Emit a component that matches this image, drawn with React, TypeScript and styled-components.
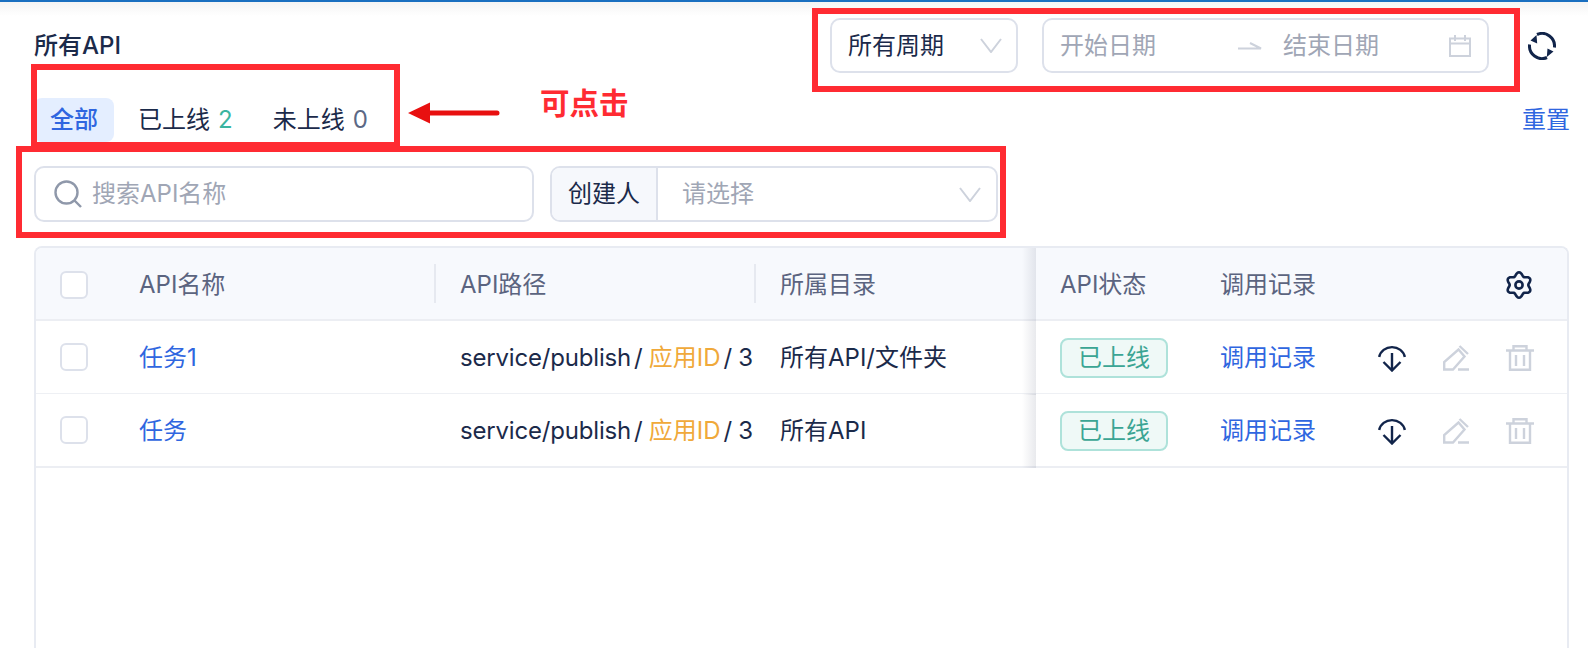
import React from "react";
import styled, { createGlobalStyle } from "styled-components";

const GlobalStyle = createGlobalStyle`
  html, body { margin: 0; padding: 0; background: #fff; }
  body { font-family: Inter, "Noto Sans CJK SC", sans-serif; font-size: 24px; line-height: 32px; color: #1b2a4a; }
`;

const INK = "#11244a";
const MUTED = "#cdd2dc";
const BLUE = "#2f66e0";

const Page = styled.div`
  position: relative;
  width: 1588px;
  height: 648px;
  box-sizing: border-box;
  overflow: hidden;
  border-top: 2px solid #1a6fc0;
  background: linear-gradient(#f4f4f4, #fff 14px);
  padding: 16px 19px 0 34px;
  display: flex;
  flex-direction: column;
`;

const TopRow = styled.div`
  display: flex;
  align-items: center;
  justify-content: space-between;
  height: 55px;
`;

const Title = styled.h1`
  margin: 0;
  font-size: 24px;
  line-height: 32px;
  font-weight: 500;
  color: #1b2a4a;
`;

const TopControls = styled.div`
  display: flex;
  align-items: center;
`;

const Box = styled.div<{ $h?: number }>`
  box-sizing: border-box;
  height: ${(p) => p.$h ?? 55}px;
  border: 2px solid #dde1eb;
  border-radius: 10px;
  background: #fff;
  display: flex;
  align-items: center;
`;

const PeriodSelect = styled(Box)`
  width: 188px;
  padding: 0 14px 0 16px;
  justify-content: space-between;
  color: #1b2a4a;
`;

const DateRange = styled(Box)`
  width: 447px;
  margin-left: 24px;
  padding: 0 16px;
  color: #a0a6b5;
`;

const DateText = styled.span`
  width: 96px;
`;

const RangeArrow = styled.svg`
  margin-left: 82px;
  margin-right: 21px;
`;

const CalendarIcon = styled.svg`
  margin-left: auto;
`;

const RefreshIcon = styled.svg`
  margin-left: 39px;
  margin-right: 13px;
`;

const TabRow = styled.div`
  display: flex;
  align-items: center;
  justify-content: space-between;
  margin-top: 25px;
  height: 44px;
`;

const Tabs = styled.div`
  display: flex;
  align-items: center;
  gap: 8px;
`;

const Tab = styled.div<{ $active?: boolean }>`
  height: 44px;
  box-sizing: border-box;
  padding: 0 16px;
  border-radius: 8px;
  display: flex;
  align-items: center;
  background: ${(p) => (p.$active ? "#e4eeff" : "transparent")};
  color: ${(p) => (p.$active ? BLUE : "#1b2a4a")};
  font-weight: ${(p) => (p.$active ? 500 : 400)};
`;

const Count = styled.span<{ $color: string }>`
  margin-left: 8px;
  color: ${(p) => p.$color};
`;

const ResetLink = styled.a`
  color: ${BLUE};
  margin-right: -1px;
  cursor: pointer;
`;

const FilterRow = styled.div`
  display: flex;
  gap: 16px;
  margin-top: 24px;
`;

const SearchBox = styled(Box)`
  width: 500px;
  padding-left: 18px;
  color: #a0a6b5;
`;

const SearchIcon = styled.svg`
  margin-right: 10px;
`;

const CreatorSelect = styled(Box)`
  width: 448px;
  overflow: hidden;
`;

const Addon = styled.div`
  width: 106px;
  height: 100%;
  box-sizing: border-box;
  padding-left: 16px;
  background: #f6f8fc;
  border-right: 2px solid #dde1eb;
  display: flex;
  align-items: center;
  color: #1b2a4a;
`;

const CreatorValue = styled.div`
  flex: 1;
  padding: 0 15px 0 24px;
  display: flex;
  align-items: center;
  justify-content: space-between;
  color: #a0a6b5;
`;

const Table = styled.div`
  margin-top: 24px;
  flex: 1;
  box-sizing: border-box;
  border: 2px solid #e8ebf2;
  border-bottom: none;
  border-radius: 8px 8px 0 0;
  overflow: hidden;
  background: #fff;
`;

const GridRow = styled.div`
  display: grid;
  grid-template-columns: 103px 295px 320px 282px 184px 1fr;
  height: 72px;
  box-sizing: content-box;
  align-items: center;
  border-bottom: 1px solid #eef0f4;
  &:last-child {
    border-bottom: 2px solid #eceef3;
  }
`;

const HeadRow = styled(GridRow)`
  height: 71px;
  background: #f7f9fd;
  color: #5b6480;
  border-bottom: 2px solid #eceef3;
  & > * { padding-top: 3px; }
`;

const Cell = styled.div`
  min-width: 0;
  box-sizing: border-box;
  white-space: nowrap;
  display: flex;
  align-items: center;
`;

const CheckCell = styled(Cell)`
  padding-left: 24px;
`;

const Check = styled.span`
  display: block;
  width: 28px;
  height: 28px;
  box-sizing: border-box;
  border: 2px solid #dde1eb;
  border-radius: 6px;
  background: #fff;
`;

const HeadCell = styled(Cell)`
  position: relative;
  height: 100%;
  &::before {
    content: "";
    position: absolute;
    left: 0;
    top: 16px;
    height: 39px;
    width: 2px;
    background: #e6e9f0;
  }
`;

const BodyCell = styled(Cell)`
  padding-top: 2px;
  height: 100%;
`;

const TextCell = styled(BodyCell)`
  padding-left: 26px;
`;

const HeadText = styled.span`
  padding-left: 26px;
`;

const PathCell = styled(TextCell)`
  overflow: hidden;
  display: block;
  line-height: 70px;
`;

const PathRoot = styled.span`
  letter-spacing: -0.18px;
`;

const Sep = styled.span`
  margin: 0 6px 0 3px;
`;

const AppId = styled.span`
  color: #f0a93a;
`;

const TaskLink = styled.a`
  color: ${BLUE};
`;

const FixedCell = styled(Cell)`
  position: relative;
  align-self: stretch;
  padding-left: 24px;
  &::before {
    content: "";
    position: absolute;
    left: -14px;
    top: 0;
    bottom: -2px;
    width: 14px;
    background: linear-gradient(to left, rgba(50, 60, 90, 0.11), rgba(50, 60, 90, 0));
    pointer-events: none;
  }
`;

const FixedBody = styled(FixedCell)`
  padding-top: 2px;
`;

const Tag = styled.span`
  display: flex;
  align-items: center;
  justify-content: center;
  width: 108px;
  height: 40px;
  box-sizing: border-box;
  border: 2px solid #aee2da;
  border-radius: 8px;
  background: #eff9f7;
  color: #3ba594;
`;

const ActionsCell = styled(BodyCell)`
  gap: 37px;
`;

const HeadActions = styled(Cell)`
  justify-content: space-between;
  padding-right: 34px;
  height: 100%;
`;

const RecordLink = styled.a`
  color: ${BLUE};
  margin-right: 25px;
`;

const Annotation = styled.div<{ $l: number; $t: number; $w: number; $h: number }>`
  position: absolute;
  left: ${(p) => p.$l}px;
  top: ${(p) => p.$t}px;
  width: ${(p) => p.$w}px;
  height: ${(p) => p.$h}px;
  box-sizing: border-box;
  border: 6px solid #ff2b32;
  pointer-events: none;
`;

const ClickNote = styled.div`
  position: absolute;
  left: 540px;
  top: 83px;
  font-size: 29.5px;
  line-height: 36px;
  font-weight: 700;
  color: #ff2b32;
`;

const ArrowMark = styled.svg`
  position: absolute;
  left: 408px;
  top: 100px;
`;

const Chevron = () => (
  <svg width="22" height="15" viewBox="0 0 22 15" fill="none" stroke={MUTED} strokeWidth="2">
    <path d="M1 1l10 13L21 1" />
  </svg>
);

const gearPath = (() => {
  const pts: string[] = [];
  for (let i = 0; i < 96; i++) {
    const a = (i / 96) * Math.PI * 2;
    const r = 11 + 1.7 * Math.cos(6 * a);
    const x = 14 + r * Math.sin(a);
    const y = 14 - r * Math.cos(a);
    pts.push(`${x.toFixed(2)} ${y.toFixed(2)}`);
  }
  return `M${pts.join("L")}Z`;
})();

const Gear = () => (
  <svg width="28" height="28" viewBox="0 0 28 28" fill="none" stroke={INK} strokeWidth="2.6">
    <path d={gearPath} strokeLinejoin="round" />
    <circle cx="14" cy="14" r="3.6" />
  </svg>
);

const Download = () => (
  <svg width="28" height="28" viewBox="0 0 28 28" fill="none" stroke={INK} strokeWidth="2.4">
    <path d="M1.2 13A13 12 0 0 1 26.8 13" />
    <path d="M14 9v17M5.5 18l8.5 8.5 8.5-8.5" />
  </svg>
);

const Edit = () => (
  <svg width="26" height="26" viewBox="0 0 26 26" fill="none" stroke={MUTED} strokeWidth="2.4">
    <path d="M1.2 24.5V17L15.5 4.5l6 7L10 24.5z" />
    <path d="M16.5 1L25 9M15 24.5h11" />
  </svg>
);

const Trash = () => (
  <svg width="28" height="26" viewBox="0 0 28 26" fill="none" stroke={MUTED} strokeWidth="2.4">
    <path d="M0 5.5h28M7.5 5V1.2h13V5" />
    <path d="M4 6v18.8h20V6M10 10v11M18 10v11" />
  </svg>
);

const rows = [
  { name: "任务1", dir: "所有API/文件夹" },
  { name: "任务", dir: "所有API" },
];

export default function App() {
  return (
    <>
      <GlobalStyle />
      <Page>
        <TopRow>
          <Title>所有API</Title>
          <TopControls>
            <PeriodSelect>
              所有周期
              <Chevron />
            </PeriodSelect>
            <DateRange>
              <DateText>开始日期</DateText>
              <RangeArrow width="24" height="8" viewBox="0 0 24 8" fill="none" stroke={MUTED} strokeWidth="2">
                <path d="M0 6.5h23L12 1" />
              </RangeArrow>
              <DateText>结束日期</DateText>
              <CalendarIcon width="22" height="22" viewBox="0 0 22 22" fill="none" stroke={MUTED} strokeWidth="2">
                <path d="M1 3.5h20V21H1zM1 8.5h20M6 0v6M16 0v6" />
              </CalendarIcon>
            </DateRange>
            <RefreshIcon width="28" height="28" viewBox="0 0 28 28" fill="none">
              <path d="M9 2.5A12.5 12.5 0 0 1 26.4 15.5M19 25.5A12.5 12.5 0 0 1 1.6 12.5" stroke={INK} strokeWidth="3" />
              <path d="M8.5 3 9.2 11.5 2.5 8.5zM19.5 16.5 18.8 25 25.5 19.5z" fill={INK} />
            </RefreshIcon>
          </TopControls>
        </TopRow>

        <TabRow>
          <Tabs>
            <Tab $active>全部</Tab>
            <Tab>
              已上线<Count $color="#3bb5a0">2</Count>
            </Tab>
            <Tab>
              未上线<Count $color="#5b6885">0</Count>
            </Tab>
          </Tabs>
          <ResetLink>重置</ResetLink>
        </TabRow>

        <FilterRow>
          <SearchBox $h={56}>
            <SearchIcon width="28" height="28" viewBox="0 0 28 28" fill="none" stroke="#8f98aa" strokeWidth="2.4">
              <circle cx="12.5" cy="12.5" r="11" />
              <path d="M20.5 20.5 27 27" />
            </SearchIcon>
            搜索API名称
          </SearchBox>
          <CreatorSelect $h={56}>
            <Addon>创建人</Addon>
            <CreatorValue>
              请选择
              <Chevron />
            </CreatorValue>
          </CreatorSelect>
        </FilterRow>

        <Table>
          <HeadRow>
            <CheckCell>
              <Check />
            </CheckCell>
            <Cell>API名称</Cell>
            <HeadCell>
              <HeadText>API路径</HeadText>
            </HeadCell>
            <HeadCell>
              <HeadText>所属目录</HeadText>
            </HeadCell>
            <FixedCell>API状态</FixedCell>
            <HeadActions>
              <span>调用记录</span>
              <Gear />
            </HeadActions>
          </HeadRow>
          {rows.map((r) => (
            <GridRow key={r.name}>
              <CheckCell>
                <Check />
              </CheckCell>
              <BodyCell>
                <TaskLink>{r.name}</TaskLink>
              </BodyCell>
              <PathCell>
                <PathRoot>service/publish</PathRoot>
                <Sep>/</Sep>
                <AppId>应用ID</AppId>
                <Sep>/</Sep>
                3456
              </PathCell>
              <TextCell>{r.dir}</TextCell>
              <FixedBody>
                <Tag>已上线</Tag>
              </FixedBody>
              <ActionsCell>
                <RecordLink>调用记录</RecordLink>
                <Download />
                <Edit />
                <Trash />
              </ActionsCell>
            </GridRow>
          ))}
        </Table>

        <Annotation $l={812} $t={6} $w={708} $h={84} />
        <Annotation $l={31} $t={62} $w={369} $h={84} />
        <Annotation $l={16} $t={144} $w={990} $h={92} />
        <ClickNote>可点击</ClickNote>
        <ArrowMark width="92" height="22" viewBox="0 0 92 22">
          <path d="M0 11 22 0.5V8.5H89a2.5 2.5 0 0 1 0 5H22V21.5z" fill="#e81010" />
        </ArrowMark>
      </Page>
    </>
  );
}
